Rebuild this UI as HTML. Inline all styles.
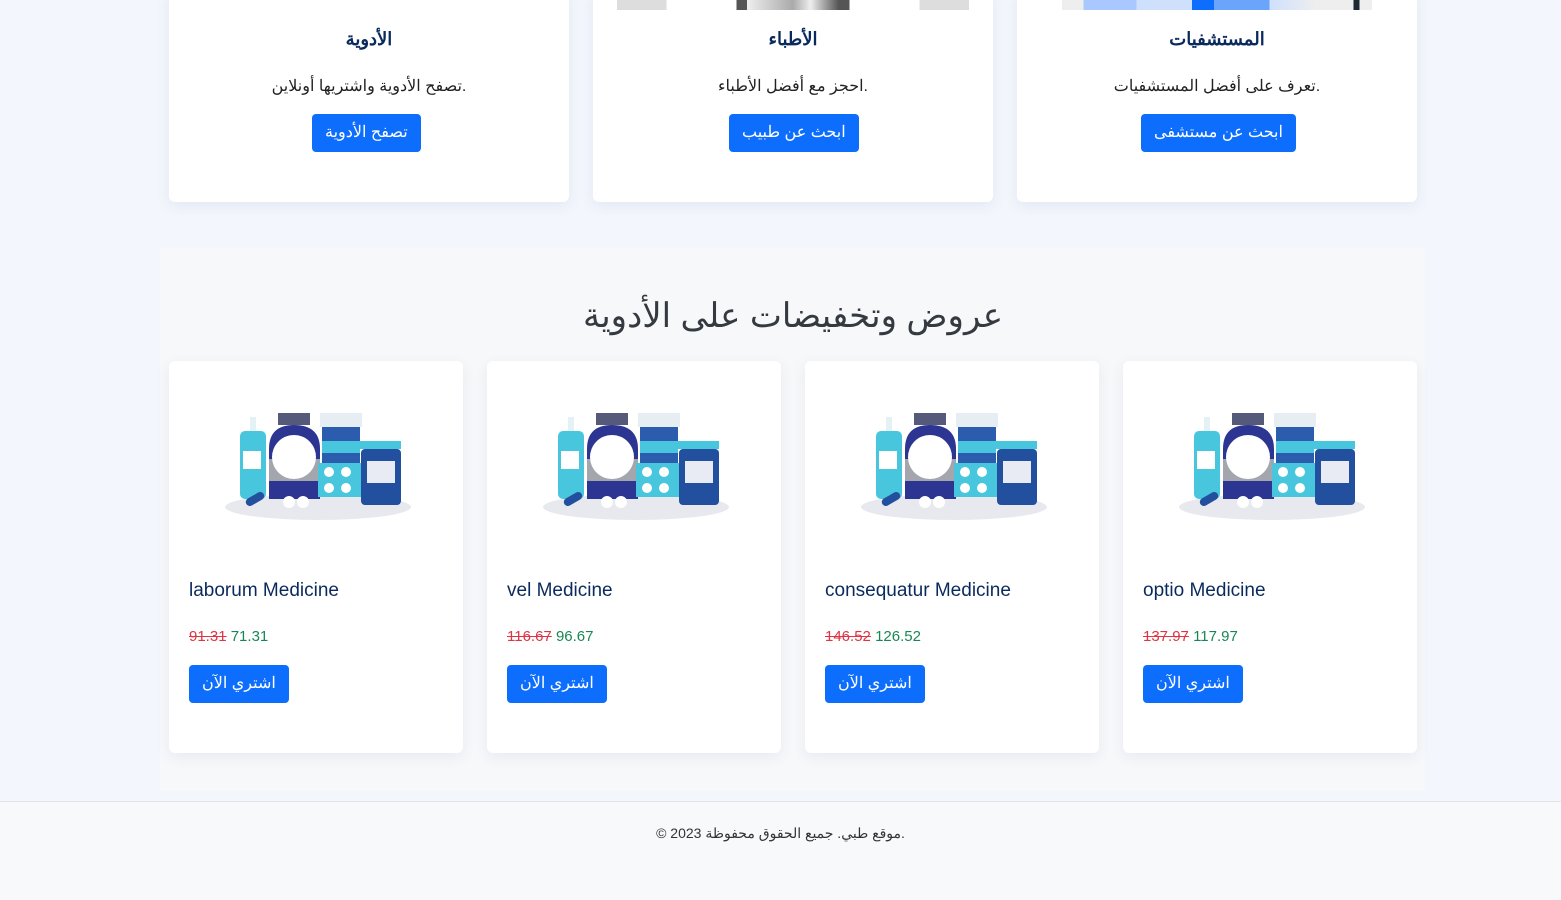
<!DOCTYPE html>
<html lang="ar" dir="ltr"><head><meta charset="utf-8">
<style>
*{box-sizing:border-box;margin:0;padding:0}
body{width:1561px;height:900px;overflow:hidden;background:#f3f6fc;font-family:"Liberation Sans","Noto Sans CJK SC",sans-serif;position:relative;color:#212529}
.card{position:absolute;background:#fff;border-radius:6px;box-shadow:0 4px 14px rgba(40,60,140,.08)}
.top{top:-10px;height:212px;width:400px;text-align:center}
.top h5{position:absolute;top:39px;width:100%;font-size:18px;font-weight:bold;color:#0a2a5e}
.top p{position:absolute;top:86px;width:100%;font-size:16px;color:#222}
.btn{position:absolute;background:#0d6efd;color:#fff;border-radius:4px;font-size:16px;height:38px;line-height:38px;padding:0 13px;white-space:nowrap}
.img{position:absolute;top:10px;height:10px}
.sect{position:absolute;left:160px;top:248px;width:1265px;height:543px;background:#f7f8fa}
h2{position:absolute;top:296px;left:0;width:1586px;text-align:center;font-size:34px;font-weight:normal;color:#343a40}
.pc{top:361px;width:294px;height:392px}
.pc svg{position:absolute;left:56px;top:48px}
.pc h5{position:absolute;left:20px;top:219px;font-size:19px;font-weight:normal;color:#0a2a5e}
.pc .pr{position:absolute;left:20px;top:267px;font-size:15px}
.old{color:#dc3545;text-decoration:line-through}.new{color:#198754}
.pc .btn{left:20px;top:304px}
footer{position:absolute;top:801px;left:0;width:1561px;height:99px;background:#f8f9fa;border-top:1px solid #e2e4e8;text-align:center;font-size:14px;color:#333;padding-top:23px}
</style></head><body>
<div class="card top" style="left:169px"><h5>الأدوية</h5><p>تصفح الأدوية واشتريها أونلاين.</p><div class="btn" style="left:143px;top:124px">تصفح الأدوية</div></div>
<div class="card top" style="left:593px">
<div class="img" style="left:24px;width:352px;top:0;height:20px;background:linear-gradient(90deg,#ddd 0,#ddd 14%,#fff 14%,#fff 34%,#555 34%,#555 37%,#eee 37%,#aaa 50%,#eee 55%,#555 63%,#555 66%,#fff 66%,#fff 86%,#ddd 86%)"></div>
<h5>الأطباء</h5><p>احجز مع أفضل الأطباء.</p><div class="btn" style="left:136px;top:124px">ابحث عن طبيب</div></div>
<div class="card top" style="left:1017px">
<div class="img" style="left:45px;width:310px;top:0;height:20px;background:linear-gradient(90deg,#eee 0,#eee 7%,#a8c8ff 7%,#a8c8ff 24%,#cfe0fd 24%,#cfe0fd 42%,#0d6efd 42%,#0d6efd 49%,#6aa5fb 49%,#6aa5fb 67%,#cfe0fd 67%,#eee 82%,#eee 94%,#1c2833 94%,#1c2833 96%,#eee 96%)"></div>
<h5>المستشفيات</h5><p>تعرف على أفضل المستشفيات.</p><div class="btn" style="left:124px;top:124px">ابحث عن مستشفى</div></div>
<div class="sect"></div>
<h2>عروض وتخفيضات على الأدوية</h2>
<svg width="0" height="0" style="position:absolute"><defs>
<g id="med">
<ellipse cx="93" cy="98" rx="93" ry="13" fill="#e8e9ee"/>
<rect x="15" y="22" width="26" height="68" rx="5" fill="#48c6dd"/>
<rect x="18" y="42" width="18" height="18" fill="#fff"/>
<rect x="25" y="8" width="6" height="14" fill="#e4f2f6"/>
<rect x="53" y="4" width="32" height="12" fill="#555a7a"/>
<path d="M44 40 Q44 16 69 16 Q95 16 95 40 L95 90 L44 90Z" fill="#2c3591"/>
<rect x="44" y="50" width="51" height="22" fill="#a4a6ad"/>
<circle cx="69" cy="48" r="22" fill="#fff"/>
<rect x="95" y="4" width="42" height="14" fill="#e6edf3"/>
<rect x="97" y="18" width="38" height="58" fill="#2b5cae"/>
<rect x="97" y="32" width="38" height="12" fill="#48c6dd"/>
<rect x="93" y="54" width="44" height="34" fill="#48c6dd"/>
<circle cx="104" cy="63" r="5" fill="#fff"/><circle cx="121" cy="63" r="5" fill="#fff"/><circle cx="104" cy="79" r="5" fill="#fff"/><circle cx="121" cy="79" r="5" fill="#fff"/>
<rect x="134" y="32" width="42" height="8" fill="#48c6dd"/>
<rect x="136" y="40" width="40" height="56" rx="4" fill="#23509e"/>
<rect x="142" y="52" width="28" height="22" fill="#e8ebf4"/>
<rect x="20" y="86" width="20" height="8" rx="4" fill="#23509e" transform="rotate(-30 30 90)"/>
<circle cx="64" cy="93" r="6" fill="#fff"/><circle cx="78" cy="93" r="6" fill="#fff"/>
</g></defs></svg>
<div class="card pc" style="left:169px"><svg width="190" height="115"><use href="#med"/></svg><h5>laborum Medicine</h5><div class="pr"><span class="old">91.31</span> <span class="new">71.31</span></div><div class="btn">اشتري الآن</div></div>
<div class="card pc" style="left:487px"><svg width="190" height="115"><use href="#med"/></svg><h5>vel Medicine</h5><div class="pr"><span class="old">116.67</span> <span class="new">96.67</span></div><div class="btn">اشتري الآن</div></div>
<div class="card pc" style="left:805px"><svg width="190" height="115"><use href="#med"/></svg><h5>consequatur Medicine</h5><div class="pr"><span class="old">146.52</span> <span class="new">126.52</span></div><div class="btn">اشتري الآن</div></div>
<div class="card pc" style="left:1123px"><svg width="190" height="115"><use href="#med"/></svg><h5>optio Medicine</h5><div class="pr"><span class="old">137.97</span> <span class="new">117.97</span></div><div class="btn">اشتري الآن</div></div>
<footer>© 2023 موقع طبي. جميع الحقوق محفوظة.</footer>
</body></html>
